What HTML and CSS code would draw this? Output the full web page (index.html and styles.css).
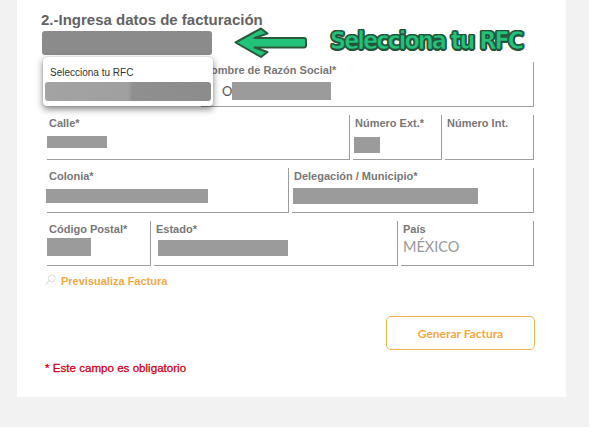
FILE: index.html
```html
<!DOCTYPE html>
<html lang="es">
<head>
<meta charset="utf-8">
<title>Facturación</title>
<link rel="stylesheet" href="styles.css">
</head>
<body>
<div class="page">
  <div class="panel">
    <h2 class="title">2.-Ingresa datos de facturación</h2>
    <div class="rfc-select"></div>

    <div class="rfc-menu">
      <div class="rfc-option">Selecciona tu RFC</div>
      <div class="rfc-option-active"></div>
    </div>

    <svg class="hint-arrow" width="76" height="32" viewBox="0 0 76 32" aria-hidden="true">
      <path d="M2.5 15.5 L28 1.5 L34.5 6.5 L21.5 11 L71 11 Q73 11 73 13 L73 18.5 Q73 20.5 71 20.5 L21.5 20.5 L34.5 25 L28 30 Z" fill="#22c27b" stroke="#2a5a3c" stroke-width="2" stroke-linejoin="round"/>
    </svg>
    <div class="hint-text">Selecciona tu RFC</div>

    <div class="form">
      <div class="row">
        <div class="cell cell-empty"></div>
        <div class="field f-name">
          <div class="label">Nombre de Razón Social*</div>
          <div class="value value-name"><span class="letter">O</span><span class="bar bar-name"></span></div>
        </div>
      </div>
      <div class="row">
        <div class="field f-calle">
          <div class="label">Calle*</div>
          <div class="bar bar-calle"></div>
        </div>
        <div class="field f-num">
          <div class="label">Número Ext.*</div>
          <div class="bar bar-ext"></div>
        </div>
        <div class="field f-num">
          <div class="label">Número Int.</div>
        </div>
      </div>
      <div class="row">
        <div class="field f-half">
          <div class="label">Colonia*</div>
          <div class="bar bar-colonia"></div>
        </div>
        <div class="field f-half">
          <div class="label">Delegación / Municipio*</div>
          <div class="bar bar-deleg"></div>
        </div>
      </div>
      <div class="row">
        <div class="field f-cp">
          <div class="label">Código Postal*</div>
          <div class="bar bar-cp"></div>
        </div>
        <div class="field f-estado">
          <div class="label">Estado*</div>
          <div class="bar bar-estado"></div>
        </div>
        <div class="field f-pais">
          <div class="label">País</div>
          <div class="country">MÉXICO</div>
        </div>
      </div>
    </div>

    <div class="preview">
      <svg class="search-icon" width="11" height="11" viewBox="0 0 11 11" aria-hidden="true">
        <circle cx="6.8" cy="4.3" r="3.4" fill="none" stroke="#dcdcdc" stroke-width="1"/>
        <path d="M4.4 6.7 L1 10.2" stroke="#dcdcdc" stroke-width="1.2" stroke-linecap="round"/>
      </svg>
      <span>Previsualiza Factura</span>
    </div>

    <div class="actions">
      <button class="btn-generate" type="button">Generar Factura</button>
    </div>

    <p class="required">* Este campo es obligatorio</p>
  </div>
</div>
</body>
</html>
```

FILE: styles.css
```css
html, body {
  margin: 0;
  padding: 0;
  background: #ffffff;
}

.page {
  width: 589px;
  height: 427px;
  background: #f2f2f2;
  padding-left: 17px;
  box-sizing: border-box;
}

.panel {
  position: relative;
  width: 549px;
  height: 397px;
  background: #ffffff;
  box-sizing: border-box;
  padding: 11px 31px 0 24px;
  font-family: "Liberation Sans", Arial, sans-serif;
}

.title {
  margin: 0;
  font-size: 15px;
  line-height: 18px;
  font-weight: bold;
  color: #636363;
}

.rfc-select {
  margin: 2px 0 0 1px;
  width: 170px;
  height: 24px;
  background: #8b8b8b;
  border-radius: 3px;
}

/* open dropdown list (overlay) */
.rfc-menu {
  position: absolute;
  left: 26px;
  top: 57px;
  width: 170px;
  height: 49px;
  box-sizing: border-box;
  padding: 10px 2px 0 2px;
  background: #ffffff;
  border-radius: 4px;
  box-shadow: 0 3px 7px rgba(0, 0, 0, 0.5), 0 0 1px rgba(0, 0, 0, 0.35);
  z-index: 2;
}

.rfc-option {
  padding-left: 5px;
  font-size: 10px;
  line-height: 12px;
  color: #333333;
}

.rfc-option-active {
  margin-top: 3px;
  height: 19px;
  border-radius: 3px;
  background: linear-gradient(90deg, #a3a3a3 0%, #a0a0a0 50%, #8f8f8f 53%, #8c8c8c 100%);
}

/* annotation overlay */
.hint-arrow {
  position: absolute;
  left: 216px;
  top: 27px;
}

.hint-text {
  position: absolute;
  left: 313px;
  top: 28px;
  font-family: "DejaVu Sans Condensed", "DejaVu Sans", sans-serif;
  font-weight: bold;
  font-size: 25px;
  line-height: 25px;
  letter-spacing: -2.05px;
  color: #22c27b;
  -webkit-text-stroke: 0.6px #24533a;
  text-shadow:
    1.5px 0 0 #24533a, -1.5px 0 0 #24533a, 0 1.5px 0 #24533a, 0 -1.5px 0 #24533a,
    1px 1px 0 #24533a, -1px -1px 0 #24533a, 1px -1px 0 #24533a, -1px 1px 0 #24533a;
  white-space: nowrap;
}

/* form grid */
.form {
  margin: 7px 0 0 6px;
  width: 487px;
  display: flex;
  flex-direction: column;
  gap: 8px;
}

.row {
  display: flex;
  gap: 3px;
}

.cell-empty {
  width: 151px;
  height: 45px;
  flex: none;
}

.field {
  flex: none;
  height: 45px;
  box-sizing: border-box;
  padding-top: 2px;
  border-right: 1px solid #9d9d9d;
  border-bottom: 1px solid #9d9d9d;
}

.f-name { width: 333px; }
.f-calle { width: 303px; }
.f-num { width: 89px; }
.f-half { width: 242px; }
.f-cp { width: 104px; }
.f-estado { width: 244px; }
.f-pais { width: 133px; }

.label {
  padding-left: 2px;
  font-size: 11px;
  line-height: 13px;
  font-weight: bold;
  color: #777777;
  white-space: nowrap;
}

.bar {
  background: #9b9b9b;
}

.value-name {
  display: flex;
  align-items: center;
  margin-top: 5px;
  padding-left: 21px;
}

.letter {
  font-family: Lato, "Liberation Sans", sans-serif;
  font-size: 13px;
  line-height: 18px;
  color: #555555;
  margin-right: 0;
}

.bar-name { width: 99px; height: 18px; }
.bar-calle { margin-top: 6px; width: 60px; height: 12px; }
.bar-ext { margin: 7px 0 0 1px; width: 26px; height: 16px; }
.bar-colonia { margin: 6px 0 0 -1px; width: 162px; height: 14px; }
.bar-deleg { margin: 5px 0 0 1px; width: 185px; height: 16px; }
.bar-cp { margin-top: 2px; width: 44px; height: 18px; }
.bar-estado { margin: 4px 0 0 4px; width: 130px; height: 16px; }

.country {
  margin-top: 2px;
  padding-left: 2px;
  font-family: Lato, "Liberation Sans", sans-serif;
  font-size: 14.5px;
  line-height: 18px;
  color: #999999;
}

.preview {
  margin: 7px 0 0 4px;
  display: flex;
  align-items: flex-start;
  gap: 5px;
  font-size: 11px;
  line-height: 16px;
  font-weight: bold;
  color: #f5a843;
}

.search-icon {
  margin-top: 1px;
}

.actions {
  margin-top: 27px;
  display: flex;
  justify-content: flex-end;
}

.btn-generate {
  width: 149px;
  height: 34px;
  margin: 0;
  padding: 0;
  background: #ffffff;
  border: 1px solid #f2b450;
  border-radius: 5px;
  font-family: Lato, "Liberation Sans", sans-serif;
  font-weight: bold;
  font-size: 12px;
  color: #f5a843;
}

.required {
  margin: 11px 0 0 4px;
  font-size: 11.6px;
  line-height: 14px;
  color: #d0021b;
  -webkit-text-stroke: 0.3px #d0021b;
}
```
